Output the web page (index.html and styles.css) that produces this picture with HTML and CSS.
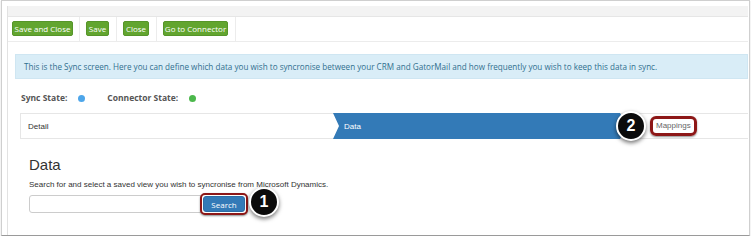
FILE: index.html
```html
<!DOCTYPE html>
<html lang="en">
  <head>
    <meta charset="UTF-8" />
    <meta name="viewport" content="width=device-width, initial-scale=1.0" />
    <title>Sync</title>
    <link rel="stylesheet" href="styles.css">
  </head>
  <body>
    <div class="frame">
      <div class="app">
        <div class="topband"></div>
        <div class="toolbar">
          <div class="group"><button class="btn-green w1">Save and Close</button></div>
          <div class="group"><button class="btn-green w2">Save</button></div>
          <div class="group"><button class="btn-green w3">Close</button></div>
          <div class="group"><button class="btn-green w4">Go to Connector</button></div>
        </div>

        <div class="alert">
          This is the Sync screen. Here you can define which data you wish to syncronise between your CRM and GatorMail and how frequently you wish to keep this data in sync.
        </div>

        <div class="states">
          <span class="label">Sync State:</span>
          <span class="dot blue"></span>
          <span class="label second">Connector State:</span>
          <span class="dot green"></span>
        </div>

        <!-- Wizard steps -->
        <div class="wizard">
          <div class="step detail">Detail</div>
          <div class="step active">Data</div>
          <div class="step last"><span class="marked">Mappings</span></div>
          <div class="badge badge-two">2</div>
        </div>

        <div class="content">
          <h2>Data</h2>
          <p>Search for and select a saved view you wish to syncronise from Microsoft Dynamics.</p>
          <div class="search-row">
            <input type="text" class="search-input" />
            <span class="marked-btn"><button class="btn-blue">Search</button></span>
            <div class="badge badge-one">1</div>
          </div>
        </div>
      </div>
    </div>
  </body>
</html>
```

FILE: styles.css
```css
body {
  margin: 0;
  background-color: #fff;
  font-family: "Open Sans", sans-serif;
}
.frame {
  width: 749px;
  height: 236px;
  margin-left: 1px;
  border: 1px solid #cfcfcf;
  border-bottom-color: #9a9a9a;
  box-shadow: 0 1px 1px rgba(0, 0, 0, 0.25);
  padding: 5px 0 0 5px;
  box-sizing: border-box;
  overflow: hidden;
}
.app {
  width: 740px;
  height: 232px;
  border-left: 1px solid #e2e2e2;
}
.topband {
  height: 10px;
  background-color: #f3f3f3;
  border-bottom: 1px solid #e6e6e6;
}
/* Toolbar */
.toolbar {
  display: flex;
  height: 24px;
  border-bottom: 1px solid #ececec;
}
.group {
  padding: 4px 6px 0 4px;
  border-right: 1px solid #ececec;
}
.group + .group {
  padding: 4px 7px 0 6px;
}
.btn-green {
  display: block;
  height: 15px;
  padding: 0;
  background-color: #62a52f;
  border: 1px solid #56952a;
  border-radius: 2px;
  color: #fff;
  font-family: "Open Sans", sans-serif;
  font-size: 8px;
  line-height: 13px;
  text-align: center;
  white-space: nowrap;
}
.w1 { width: 61px; }
.w2 { width: 23px; }
.w3 { width: 26px; }
.w4 { width: 65px; }
.alert {
  margin: 12px 0 0 7px;
  height: 25px;
  box-sizing: border-box;
  padding-left: 8px;
  background-color: #d9edf7;
  border: 1px solid #cfe6f2;
  color: #31708f;
  font-size: 8.15px;
  line-height: 23px;
  white-space: nowrap;
}
.states {
  display: flex;
  align-items: center;
  margin: 12px 0 0 13px;
  height: 12px;
  color: #555;
  font-size: 8.5px;
  font-weight: bold;
}
.label.second {
  margin-left: 22px;
}
.dot {
  width: 7px;
  height: 7px;
  border-radius: 50%;
  margin: 3px 0 0 11px;
}
.dot.blue { background-color: #4ea6ea; }
.dot.green { background-color: #4cb84c; }
/* Wizard */
.wizard {
  position: relative;
  display: flex;
  margin: 10px 0 0 12px;
  height: 24px;
  border: 1px solid #e6e6e6;
  border-right: none;
  font-family: "Liberation Sans", Arial, sans-serif;
  font-size: 8px;
}
.step {
  display: flex;
  align-items: center;
}
.detail {
  width: 312px;
  padding-left: 7px;
  box-sizing: border-box;
  color: #333;
}
.active {
  width: 294px;
  margin-top: -1px;
  margin-bottom: -1px;
  padding-left: 11px;
  box-sizing: border-box;
  background-color: #337ab7;
  color: #fff;
  clip-path: polygon(0 0, calc(100% - 7px) 0, 100% 50%, calc(100% - 7px) 100%, 0 100%, 6px 50%);
}
.last {
  flex: 1;
  padding-left: 23px;
}
.marked {
  display: inline-block;
  padding: 2px 3px 3px 3px;
  border: 3px solid #8d1717;
  border-radius: 6px;
  box-shadow: 0 1px 2px rgba(0, 0, 0, 0.45);
  color: #666;
  font-size: 8px;
  line-height: 9px;
}
.badge {
  position: absolute;
  width: 26px;
  height: 26px;
  border: 2px solid #fff;
  border-radius: 50%;
  background-color: #0b0b0b;
  box-shadow: 0 2px 4px rgba(0, 0, 0, 0.55);
  color: #fff;
  font-family: "Liberation Sans", Arial, sans-serif;
  font-weight: bold;
  font-size: 16px;
  line-height: 26px;
  text-align: center;
}
.badge-two {
  left: 595px;
  top: -3px;
}
/* Data section */
.content {
  padding-left: 21px;
  font-family: "Liberation Sans", Arial, sans-serif;
  color: #333;
}
.content h2 {
  margin: 17px 0 0 0;
  font-size: 15px;
  font-weight: normal;
  line-height: 17px;
}
.content p {
  margin: 7px 0 0 0;
  font-size: 8px;
  line-height: 10px;
}
.search-row {
  position: relative;
  display: flex;
  align-items: center;
  margin-top: 3px;
}
.search-input {
  width: 178px;
  height: 18px;
  box-sizing: border-box;
  border: 1px solid #ccc;
  border-radius: 3px;
  padding: 0;
}
.marked-btn {
  margin-left: -7px;
  padding: 1px;
  border: 2px solid #8d1717;
  border-radius: 5px;
  box-shadow: 0 1px 2px rgba(0, 0, 0, 0.45);
  background-color: #fff;
}
.btn-blue {
  display: block;
  width: 42px;
  height: 16px;
  padding: 0;
  background-color: #337ab7;
  border: 1px solid #2e6da4;
  border-radius: 3px;
  color: #fff;
  font-family: "Open Sans", sans-serif;
  font-size: 8px;
}
.badge-one {
  left: 220px;
  top: -6px;
}
```
